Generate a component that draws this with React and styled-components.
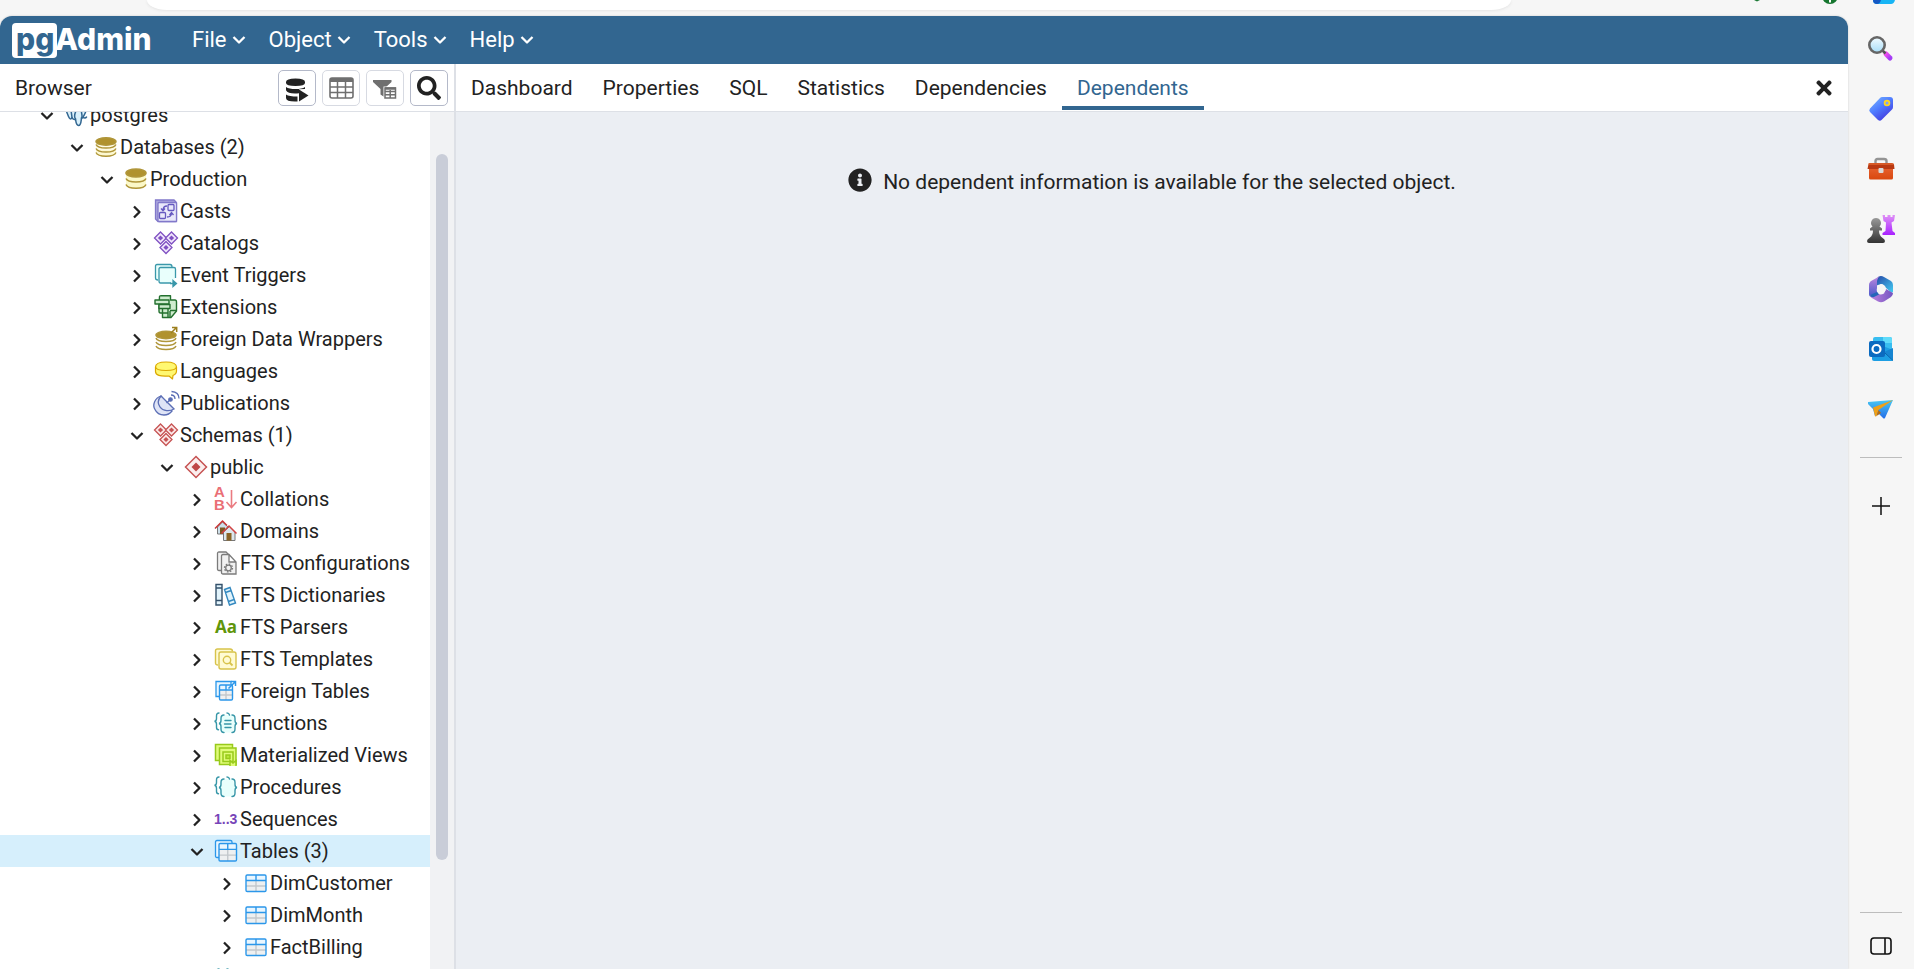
import React from 'react';
import styled, { createGlobalStyle } from 'styled-components';
import { FaSearch, FaTimes, FaInfoCircle } from 'react-icons/fa';

const GlobalStyle = createGlobalStyle`
  *, *::before, *::after { box-sizing: border-box; }
  body {
    margin: 0;
    background: #f6f6f6;
    color: #222;
    font-family: Roboto, "Liberation Sans", sans-serif;
    font-size: 21px;
  }
  button { font: inherit; color: inherit; background: none; border: 0; padding: 0; cursor: pointer; }
  svg { display: block; flex: none; }
`;

const blue = '#326690';
const line = '#dde0e6';

/* ---------- window frame ---------- */

const Page = styled.div`
  display: flex;
  flex-direction: column;
  height: 100vh;
  overflow: hidden;
`;

const BrowserStrip = styled.div`
  display: flex;
  flex: none;
  height: 16px;
  padding-left: 147px;
`;

const AddressBar = styled.div`
  flex: 1;
  height: 10px;
  background: #fff;
  border-radius: 0 0 20px 20px / 0 0 10px 10px;
  box-shadow: 0 1px 3px #e4e4e4;
`;

const StripActions = styled.div`
  display: flex;
  align-items: flex-start;
  justify-content: flex-end;
  gap: 35px;
  width: 403px;
  padding-right: 19px;
`;

const Body = styled.div`
  display: flex;
  flex: 1;
  min-height: 0;
`;

const AppWindow = styled.div`
  display: flex;
  flex-direction: column;
  flex: 1;
  min-width: 0;
  border-radius: 12px 12px 0 0;
  overflow: hidden;
  box-shadow: 0 0 2px #c4c4c4;
`;

/* ---------- header ---------- */

const Header = styled.header`
  display: flex;
  align-items: center;
  flex: none;
  height: 48px;
  padding-left: 12px;
  background: ${blue};
  color: #fff;
`;

const Logo = styled.div`
  display: flex;
  align-items: center;
  width: 168px;
  font-family: Inter, "DejaVu Sans", sans-serif;
  font-size: 30px;
  font-weight: 800;
  line-height: 33px;
`;

const LogoMark = styled.span`
  width: 45px;
  height: 35px;
  padding-left: 4px;
  border-radius: 4px;
  background: #fff;
  color: ${blue};
`;

const LogoName = styled.span`
  height: 35px;
  margin-left: -2px;
`;

const Menu = styled.nav`
  display: flex;
  gap: 23px;
  margin-left: 12px;
`;

const MenuButton = styled.button`
  display: flex;
  align-items: center;
  gap: 5px;
  font-size: 22px;
  line-height: 28px;
`;

/* ---------- panels ---------- */

const Panels = styled.div`
  display: flex;
  flex: 1;
  min-height: 0;
`;

const BrowserPanel = styled.section`
  display: flex;
  flex-direction: column;
  flex: none;
  width: 456px;
  border-right: 2px solid ${line};
  background: #fff;
`;

const PanelBar = styled.div`
  display: flex;
  align-items: center;
  flex: none;
  height: 48px;
  border-bottom: 1px solid ${line};
  background: #fff;
`;

const PanelTitle = styled.h1`
  flex: 1;
  margin: 0;
  padding-left: 15px;
  font-size: 21px;
  font-weight: 400;
`;

const Tools = styled.div`
  display: flex;
  gap: 6px;
  padding-right: 6px;
`;

const ToolButton = styled.button`
  display: flex;
  align-items: center;
  justify-content: center;
  width: 38px;
  height: 36px;
  border: 1px solid ${p => (p.disabled ? '#d7dae2' : '#b4b9c9')};
  border-radius: 5px;
  color: ${p => (p.disabled ? '#6f6f6f' : '#222')};
`;

const TreeArea = styled.div`
  display: flex;
  flex: 1;
  min-height: 0;
  overflow: hidden;
`;

const Tree = styled.ul`
  flex: 1;
  margin: -13px 0 0;
  padding: 0;
  list-style: none;
`;

const TreeRow = styled.li`
  display: flex;
  align-items: center;
  height: 32px;
  padding-left: ${p => 35 + p.$level * 30}px;
  background: ${p => (p.$selected ? '#d6effc' : 'transparent')};
  font-size: 20px;
  white-space: nowrap;
`;

const Toggle = styled.button`
  display: flex;
  align-items: center;
  justify-content: center;
  width: 24px;
  height: 24px;
  margin-right: 5px;
  padding-top: 2px;
`;

const TreeLabel = styled.span`
  padding-left: 2px;
`;

const ScrollTrack = styled.div`
  flex: none;
  width: 24px;
  padding: 42px 6px 0;
  background: #f1f2f4;
`;

const ScrollThumb = styled.div`
  height: calc(100% - 109px);
  border-radius: 6px;
  background: #c9cdd8;
`;

const MainPanel = styled.section`
  display: flex;
  flex-direction: column;
  flex: 1;
  min-width: 0;
  background: #ebeef3;
`;

const TabList = styled.div`
  display: flex;
  flex: 1;
  height: 46px;
  margin-bottom: 1px;
`;

const Tab = styled.button`
  padding: 6px 15px 0;
  border-bottom: 4px solid ${p => (p.$active ? blue : 'transparent')};
  color: ${p => (p.$active ? blue : '#222')};
`;

const CloseButton = styled.button`
  padding: 0 13px;
`;

const Message = styled.p`
  display: flex;
  align-items: flex-start;
  justify-content: center;
  gap: 11px;
  margin: 0;
  padding-top: 56px;
  line-height: 28px;
`;

/* ---------- side rail ---------- */

const Rail = styled.aside`
  display: flex;
  flex-direction: column;
  align-items: center;
  flex: none;
  width: 66px;
  padding-top: 3px;
`;

const RailButton = styled.button`
  display: flex;
  align-items: center;
  justify-content: center;
  width: 48px;
  height: ${p => (p.$compact ? 46 : 60)}px;
`;

const RailDivider = styled.hr`
  width: 42px;
  height: 1px;
  margin: ${p => (p.$bottom ? 'auto 0 10px' : '18px 0')};
  border: 0;
  background: #bdbdbd;
`;

/* ---------- icons ---------- */

const ChevronDown = () => (
  <svg width="14" height="10" viewBox="0 0 14 10" fill="none" stroke="currentColor" strokeWidth="2.3">
    <path d="M1.5 2 L7 7.5 L12.5 2" strokeLinejoin="round" />
  </svg>
);

const ChevronRight = () => (
  <svg width="10" height="14" viewBox="0 0 10 14" fill="none" stroke="currentColor" strokeWidth="2.3">
    <path d="M2 1.5 L7.5 7 L2 12.5" strokeLinejoin="round" />
  </svg>
);

const Diamonds = ({ color, fill }) =>
  [[6.5, 7], [17.5, 7], [12, 16.5]].map(([x, y]) => (
    <g key={`${x}-${y}`}>
      <path d={`M${x} ${y - 6} l6 6 l-6 6 l-6 -6z`} fill={fill} stroke={color} strokeWidth="1.3" />
      <path d={`M${x} ${y - 2.6} l2.6 2.6 l-2.6 2.6 l-2.6 -2.6z`} fill={color} />
    </g>
  ));

const Braces = ({ children }) => (
  <g fill="none" stroke="#3797a8" strokeWidth="1.4" strokeLinecap="round">
    <path d="M7 4 h10 q3 1 3 5 q0 3 2 3.500 q-2 .5 -2 4 q0 5 -4 5 h-7 q-3 0 -3 -5 q0 -3 -2 -3.500 q2 -.5 2 -4z" fill="#e8fffc" stroke="none" />
    <path d="M5 2 q-2.500 0 -2.500 3 v2.500 q0 2.500 -2 2.700 q2 .3 2 3 v3 q0 2.500 2 2.500" />
    <path d="M10 4 q-3 0 -3 3.500 v2 q0 2.700 -2 3 q2 .3 2 3 v2.500 q0 3.500 3 3.500" />
    <path d="M13 2 q2 0 2.500 2 M18 4 q3 0 3 3.500 v2 q0 2.700 2 3 q-2 .3 -2 3 v2.500 q0 3.500 -3 3.500" />
    {children}
  </g>
);

const TableGrid = ({ x, y, w, h }) => {
  const r1 = y + h / 3;
  const r2 = y + (h * 2) / 3;
  const c = x + w / 2;
  return (
    <g fill="none" strokeWidth="1.4">
      <rect x={x} y={y} width={w} height={h} rx="1.200" fill="#eef0f1" />
      <rect x={x} y={y} width={w} height={h / 3} fill="#e9f6ff" />
      <path d={`M${x} ${r2} h${w} M${c} ${r1} v${(h * 2) / 3}`} stroke="#c3c8cc" />
      <path d={`M${x} ${r1} h${w} M${c} ${y} v${h / 3}`} stroke="#2b97ea" />
      <rect x={x} y={y} width={w} height={h} rx="1.200" stroke="#2b97ea" />
    </g>
  );
};

const glyphs = {
  server: (
    <g stroke="#336791" strokeWidth="1.5" fill="#d9f0fb" strokeLinejoin="round" strokeLinecap="round">
      <path d="M1.500 6 C1 1 8 0 11 2 C15 -1 22 1 22.500 5 C22.500 9 20 12 18.500 15 L17.500 15 C17 19 17 22.500 14.500 22.500 C12 22.500 12 19 11.500 16 C10 17 8.500 16 8 14.500 C7 17 5.500 16 4.500 13.500z" />
      <path d="M8 14.500 L7 7 M11.500 16 C9.500 13 11 10 12 8 M17.500 15 C19 13 17 10 17.500 7 M19 14.500 q2.500 1 3.500 -.5" fill="none" />
    </g>
  ),
  databases: (
    <g fill="#fdf9d2" stroke="#b0963a" strokeWidth="1.400">
      <path d="M2 15 v3 q1 3.500 10 3.500 t10 -3.500 v-3z" stroke="none" />
      <path d="M2 6 v14 h20 v-14z" stroke="none" opacity=".6" />
      <path d="M2 9.500 q1.500 3.500 10 3.500 t10 -3.500 M2 13.500 q1.500 3.500 10 3.500 t10 -3.500 M2 17.500 q1.500 3.700 10 3.700 t10 -3.700" fill="none" />
      <ellipse cx="12" cy="6.500" rx="10" ry="3.800" fill="#b0922e" />
    </g>
  ),
  database: (
    <g fill="#fbf8c8" stroke="#b0963a" strokeWidth="1.600">
      <path d="M2 6 v12 q1 3.500 10 3.500 t10 -3.500 v-12z" stroke="none" />
      <path d="M2 11.500 q1.500 3.500 10 3.500 t10 -3.500 M2 17.500 q1.500 3.700 10 3.700 t10 -3.700" fill="none" />
      <ellipse cx="12" cy="6" rx="10" ry="4" fill="#b0922e" />
    </g>
  ),
  casts: (
    <g fill="none" stroke="#6558c0" strokeWidth="1.300">
      <path d="M1.500 20 V1 H20 L22.500 3.500 V22.500 H4z" fill="#aba6dd" stroke="#8178ca" />
      <rect x="4" y="3.500" width="18.500" height="19" rx="1" fill="#e9e8fa" stroke="#8178ca" />
      <rect x="14" y="5.500" width="6" height="6" rx="1" />
      <rect x="5.500" y="13.500" width="6" height="6" rx="1" />
      <path d="M13 7 Q9 7 9 11.500 M7 9.500 L9 11.800 L11 9.500 M13 18 Q17.500 18 17.500 14 M15.500 16 L17.500 13.500 L19.500 16" />
    </g>
  ),
  catalogs: <Diamonds color="#7f50c2" fill="#efe4fb" />,
  eventTriggers: (
    <g fill="#e9fffc" stroke="#3b98aa" strokeWidth="1.300">
      <path d="M4 17 Q1.500 17 1.500 15 V3 Q1.500 1.500 3 1.500 H16 Q18 1.500 18 4" />
      <path d="M17 20 H6.500 Q5 20 5 18 V6 Q5 4.500 6.500 4.500 H20 Q21.500 4.500 21.500 6 V15" />
      <path d="M16 20.500 H22 M19 17.500 L22.500 20.500 L19 23.500z" fill="#2d8fa2" />
    </g>
  ),
  extensions: (
    <g fill="#cfeccf" stroke="#24702f" strokeWidth="1.400" strokeLinejoin="round">
      <path d="M5.500 1.500 Q5.500 .7 7 .7 H16.500 V5 H21 Q22.500 5 22.500 7 V16 L17 22.500 H8.500 V18 H6.500 Q5 18 5 16 V12z" />
      <rect x="1" y="5" width="14" height="4" />
      <rect x="5" y="9.500" width="11" height="4" />
      <path d="M8.500 13.500 V18 H14 V14 M14 18 V22.500 M16 15.500 H22 M16 16 V22.500" fill="none" />
    </g>
  ),
  foreignData: (
    <g fill="none" stroke="#b0963a" strokeWidth="1.500">
      <path d="M2 11 q1 3.500 10 3.500 t10 -3.500 M2 15 q1.500 3.500 10 3.500 t10 -3.500 M2 19 q1.500 3.500 10 3.500 t10 -3.500" />
      <ellipse cx="12" cy="8" rx="10" ry="3.700" fill="#b0922e" />
      <path d="M17 6 L22.500 .5 M18 .5 H22.700 V5" stroke="#9d7f1d" />
    </g>
  ),
  languages: (
    <g fill="#fff871" stroke="#dba800" strokeWidth="1.200" strokeLinejoin="round">
      <path d="M1.500 8 Q1.500 3 12 3 Q22.500 3 22.500 8 V12 Q22.500 15 19 16.500 L18.500 20 L15 17 Q1.500 18 1.500 12.500z" />
      <path d="M1.500 8 Q2 11.500 12 11.500 T22.500 8" fill="none" />
    </g>
  ),
  publications: (
    <g fill="#dfe4f6" stroke="#5b6eb5" strokeWidth="1.300">
      <path d="M7 5 C1 7 -2 14 1 18.500 Q3.500 24 10 24 Q15 24 18 20z" />
      <path d="M7 5 C4.500 8 3 12 6 16 C9 20.500 16 20.500 20 18z" />
      <path d="M12.500 12 L16.500 8.500" />
      <circle cx="16.500" cy="8.500" r="1.700" fill="#5b6eb5" />
      <path d="M17 4 Q21 4 21 8 M17.500 .5 Q25 1 25 7.500" fill="none" />
    </g>
  ),
  schemas: <Diamonds color="#c65353" fill="#fbe6e6" />,
  schema: (
    <g>
      <path d="M12 1.500 L22.500 12 L12 22.500 L1.500 12z" fill="#fbeeee" stroke="#c65353" strokeWidth="1.500" />
      <path d="M12 7.500 L16.500 12 L12 16.500 L7.500 12z" fill="#bf4646" />
    </g>
  ),
  collations: (
    <g fill="#ea6f76" fontFamily="Liberation Sans, sans-serif" fontWeight="700" fontSize="15">
      <text x="0" y="10">A</text>
      <text x="0" y="23">B</text>
      <path d="M17.500 3 V20.500 M12.500 15 L17.500 20.500 L22.500 15" fill="none" stroke="#ea7a80" strokeWidth="1.600" />
    </g>
  ),
  domains: (
    <g>
      <path d="M3.500 8 L8.500 3 L14 8 V15 H3.500z" fill="#cfe0ea" stroke="#777" />
      <path d="M6 8.500 H11 V15 H6z" fill="#7d5a24" />
      <path d="M1 9.500 L8.500 2 L13 6.500" fill="none" stroke="#c93535" strokeWidth="1.500" />
      <path d="M9.500 13 L15.500 7.500 L21 13 V21.500 H9.500z" fill="#dce7ee" stroke="#777" />
      <path d="M12.500 14 H17.500 V21.500 H12.500z" fill="#8a6425" />
      <path d="M7.500 14.500 L15 7 L22.500 14.500" fill="none" stroke="#d24343" strokeWidth="1.500" />
    </g>
  ),
  ftsConfig: (
    <g fill="#f1f1f1" stroke="#7b7b7b" strokeWidth="1.300">
      <path d="M7 19.500 H5 Q3.500 19.500 3.500 18 V2.500 Q3.500 1 5 1 H12 L15 4" />
      <path d="M7.500 5 Q7.500 3.500 9 3.500 H15 L22 11 V23 H9 Q7.500 23 7.500 21.500z M15 3.500 V11 H22" />
      <circle cx="14.500" cy="17" r="2.800" fill="none" />
      <circle cx="14.500" cy="17" r="4" fill="none" strokeDasharray="1.600 1.500" />
    </g>
  ),
  ftsDictionaries: (
    <g fill="#e2f4fc" strokeWidth="1.400">
      <path d="M2 1.500 H8 V22 H2z M2 5 H8 M2 17.500 H8" stroke="#34516b" />
      <path d="M10.500 6.500 L16 4.500 L21.500 20 L15.500 22z M11.500 9.500 L17.200 7.500 M14.500 18.500 L20.200 16.500" stroke="#3489c0" />
    </g>
  ),
  ftsParsers: (
    <text x="1" y="18" fill="#5f960b" fontFamily="Open Sans, sans-serif" fontWeight="700" fontSize="17">Aa</text>
  ),
  ftsTemplates: (
    <g fill="#fffbd3" stroke="#d8c34b" strokeWidth="1.400">
      <path d="M4 18 Q1.500 18 1.500 16 V4 Q1.500 2 3.500 2 H16 Q18.500 2 18.500 4.500" />
      <rect x="5" y="5" width="17" height="17" rx="2" />
      <circle cx="13" cy="13" r="3.700" />
      <path d="M15.500 15.500 L18.500 18.500" strokeWidth="1.800" />
    </g>
  ),
  foreignTables: (
    <g>
      <path d="M5 17.500 H2 V2.500 H17 V6" fill="#e9f6ff" stroke="#2b97ea" strokeWidth="1.300" />
      <TableGrid x={5.500} y={6} w={13} h={15} />
      <path d="M14.500 9.500 L21.500 2.500 M17 2.500 H21.500 V7" fill="none" stroke="#2b97ea" strokeWidth="1.500" />
    </g>
  ),
  functions: (
    <Braces>
      <path d="M11 9.500 h6 M10.500 13 h6.500 M11 16.500 h6" />
    </Braces>
  ),
  procedures: <Braces />,
  materializedViews: (
    <g fill="#e0fb7a" stroke="#98ca1b" strokeWidth="1.500">
      <path d="M1.500 17.500 V1.500 H18.500 V17.500z" />
      <path d="M5.500 21.500 V5 H22 V21.500z" />
      <rect x="9" y="9" width="10" height="9.500" />
      <rect x="12" y="12" width="4" height="3.500" fill="#b8e83a" />
      <path d="M16 23 V17.500 L19 20 L22 17.500 V23" fill="#e0fb7a" />
    </g>
  ),
  sequences: (
    <text x="0" y="17" fill="#7745b8" fontFamily="Liberation Sans, sans-serif" fontWeight="700" fontSize="14">1..3</text>
  ),
  tables: (
    <g>
      <path d="M5 18.500 H3 Q1.500 18.500 1.500 17 V3 Q1.500 1.500 3 1.500 H16.500 Q18 1.500 18 3 V5" fill="#e9f6ff" stroke="#2b97ea" strokeWidth="1.300" />
      <TableGrid x={5} y={4.500} w={17.500} h={17.500} />
    </g>
  ),
  table: <TableGrid x={2} y={4} w={20} h={16.500} />,
  triggerFunctions: <Braces />,
};

const TreeIcon = ({ name }) => (
  <svg width="24" height="24" viewBox="0 0 24 24" overflow="visible" aria-hidden="true">
    {glyphs[name]}
  </svg>
);

const QueryToolIcon = () => (
  <svg width="24" height="28" viewBox="0 -3 24 28" fill="#222">
    <path d="M1 5 q0 -3.500 9.500 -3.500 t9.500 3.500 v1 q0 3 -9.500 3 t-9.500 -3z" />
    <path d="M1 10 q3 2 9.500 2 t9.500 -2 v2 l-6 .3 v4 q-11 1 -13 -3z" />
    <path d="M1 17.500 q3 2 11.500 2 v5 q-11.500 .5 -11.500 -3.500z" />
    <path d="M14 12.500 L23.500 18.500 L14 24.500z" />
  </svg>
);

const ViewDataIcon = () => (
  <svg width="25" height="22" viewBox="0 0 25 22" fill="none" stroke="currentColor">
    <rect x="1" y="1" width="23" height="20" rx="2" strokeWidth="1.600" />
    <path d="M1 3 h23" strokeWidth="4" />
    <path d="M1 10 h23 M1 15.500 h23 M8.500 4 v17 M16.500 4 v17" strokeWidth="1.500" />
  </svg>
);

const FilterRowsIcon = () => (
  <svg width="24" height="24" viewBox="0 -2 24 24" fill="currentColor">
    <path d="M0 2 H18.500 V4 L12 10 V19.500 L7.500 16.500 V11 L0 4z" />
    <path d="M10.500 8.500 H24 V21.500 H10.500z" fill="#fff" />
    <path d="M12 10 H22.500 V20 H12z M12 13.500 H22.500 M12 16.800 H22.500 M17.200 12 V20" fill="none" stroke="currentColor" strokeWidth="1.500" />
    <path d="M12 9.300 h11 v2.500 h-11z" />
  </svg>
);

const railItems = {
  Search: (
    <svg width="26" height="26" viewBox="0 0 26 26">
      <defs>
        <linearGradient id="lens" x2="0" y2="1"><stop stopColor="#f2fbff" /><stop offset="1" stopColor="#a6dcf7" /></linearGradient>
        <linearGradient id="handle" x2="1" y2="1"><stop stopColor="#f04cf0" /><stop offset="1" stopColor="#a33cf5" /></linearGradient>
      </defs>
      <path d="M18 18 L22 22" stroke="url(#handle)" strokeWidth="5" strokeLinecap="round" />
      <path d="M14.500 14.500 L17.500 17.500" stroke="#555" strokeWidth="2.500" />
      <circle cx="9" cy="9" r="7.700" fill="url(#lens)" stroke="#666" strokeWidth="2.600" />
    </svg>
  ),
  Shopping: (
    <svg width="26" height="26" viewBox="0 0 26 26">
      <defs><linearGradient id="tag" x1="0" y1="0" x2=".7" y2="1"><stop stopColor="#7cbcff" /><stop offset=".5" stopColor="#4f7cff" /><stop offset="1" stopColor="#4336dc" /></linearGradient></defs>
      <path d="M14 1 H22 Q25 1 25 4 V11 Q25 12.500 24 13.500 L13.500 24 Q12 25.500 10 24 L2 16 Q.5 14.500 2 12.500 L12 2 Q13 1 14 1z" fill="url(#tag)" />
      <circle cx="19" cy="7" r="2.400" fill="#7aa2ff" stroke="#ffd51c" strokeWidth="1.800" />
    </svg>
  ),
  Tools: (
    <svg width="28" height="24" viewBox="0 0 28 24">
      <defs><linearGradient id="box" x2="0" y2="1"><stop stopColor="#e86331" /><stop offset="1" stopColor="#d9480f" /></linearGradient></defs>
      <path d="M8.500 8 V4 Q8.500 2 10.500 2 H17 Q19.500 2 19.500 4 V8" fill="none" stroke="#949494" strokeWidth="2.400" />
      <rect x="2" y="9" width="24" height="13.500" rx="1.500" fill="url(#box)" />
      <path d="M1.500 7 Q1.500 6 3 6 H25 Q26.500 6 27 7.500 L27.500 12 H.5z" fill="#b93912" />
      <path d="M1.500 7 h25" stroke="#f47b3a" />
      <rect x="11.500" y="11" width="5" height="5" rx="1" fill="#d9d9d9" />
    </svg>
  ),
  Games: (
    <svg width="28" height="28" viewBox="0 0 28 28">
      <defs>
        <linearGradient id="rook" x2="0" y2="1"><stop stopColor="#df91f6" /><stop offset="1" stopColor="#a821ff" /></linearGradient>
        <linearGradient id="pawn" x2="0" y2="1"><stop stopColor="#999" /><stop offset="1" stopColor="#333" /></linearGradient>
      </defs>
      <path d="M15.500 0 H18 V2 H20.500 V0 H23.500 V2 H25.500 V0 H28 L27 6 L24.500 7.500 L25.500 16 L28 18 V20 H15.500 V18 L18.500 16 L19 7.500 L16.500 6z" fill="url(#rook)" />
      <path d="M9 3 A5 5 0 0 1 12.500 11.500 L15 13.500 V15.500 H12 Q12 20 15 22.500 Q18 24 18 26 Q18 28 16 28 H2 Q0 28 0 26 Q0 24 3 22.500 Q6 20 6 15.500 H3 V13.500 L5.500 11.500 A5 5 0 0 1 9 3z" fill="url(#pawn)" />
    </svg>
  ),
  'Microsoft 365': (
    <svg width="26" height="28" viewBox="0 0 26 28">
      <defs>
        <linearGradient id="m1" x2="1" y2="1"><stop stopColor="#2549a8" /><stop offset="1" stopColor="#44ccf3" /></linearGradient>
        <linearGradient id="m2" x2="0" y2="1"><stop stopColor="#c187de" /><stop offset="1" stopColor="#4558ca" /></linearGradient>
        <linearGradient id="m3" x2="1"><stop stopColor="#bd82df" /><stop offset="1" stopColor="#7455c1" /></linearGradient>
      </defs>
      <path d="M10 2 Q13 0 16 2 L23 6 Q25 7.500 25 10 V17 Q24 18 22 16.500 L17 12 Q16 9 13 9 L8.500 10.500 V5z" fill="url(#m1)" />
      <path d="M12 1 L4 5.500 Q1 7 1 10 V19 Q1 22 4 22 L10.500 19 Q8 16.500 9 13 V6 Q9 3 12 1z" fill="url(#m2)" />
      <path d="M2 20 L10.500 19 Q13 20 16 18.500 L18 14 L25 18 Q25 20.500 23 22 L16 26.500 Q13 28 10 26.500 L3 22.500z" fill="url(#m3)" />
      <path d="M2 20 Q3 23 6 22 L11 19.500 L9 17z" fill="#2466b8" />
      <path d="M13.500 9.500 L17 11.500 V16 L13.500 18.500 L9.500 16.500 V11.500z" fill="#f6f6f6" stroke="#f6f6f6" strokeLinejoin="round" />
    </svg>
  ),
  Outlook: (
    <svg width="26" height="26" viewBox="0 0 26 26">
      <path d="M5 3 Q5 1 7 1 H22 Q24 1 24 3 V14 H5z" fill="#38bdf0" />
      <path d="M15 1 H22 Q24 1 24 3 V7 H15z" fill="#5fdbfa" />
      <path d="M4 10 H15 L25 14 V24 Q25 25 24 25 H6 Q4 25 4 23z" fill="#1d9ee3" />
      <path d="M16 16 L25 12 V24z" fill="#1785d1" />
      <path d="M11 20 L17 17 L25 24.500" fill="none" stroke="#0c64ad" />
      <rect x="1" y="5" width="16" height="16" rx="2" fill="#0b6bc0" />
      <circle cx="8.500" cy="13" r="4" fill="none" stroke="#fff" strokeWidth="2.200" />
    </svg>
  ),
  Drop: (
    <svg width="28" height="22" viewBox="0 0 28 22">
      <defs><linearGradient id="plane" x2="0" y2="1"><stop stopColor="#49c7f2" /><stop offset="1" stopColor="#246ee9" /></linearGradient></defs>
      <path d="M1 4 L26 2 L18 20 Q17 21 16 20 L12 16 L8 18 L6 11 L1 6z" fill="url(#plane)" />
      <path d="M26 2 L6 9.500 L8 18 Q8.500 19 9.500 18 L11.500 12z" fill="#efa018" />
      <path d="M9.500 18 L11.500 12 L14 15z" fill="#b66b12" />
    </svg>
  ),
};

/* ---------- data ---------- */

const menus = ['File', 'Object', 'Tools', 'Help'];
const tabs = ['Dashboard', 'Properties', 'SQL', 'Statistics', 'Dependencies', 'Dependents'];

const tree = [
  [0, 'server', 'postgres', true],
  [1, 'databases', 'Databases (2)', true],
  [2, 'database', 'Production', true],
  [3, 'casts', 'Casts'],
  [3, 'catalogs', 'Catalogs'],
  [3, 'eventTriggers', 'Event Triggers'],
  [3, 'extensions', 'Extensions'],
  [3, 'foreignData', 'Foreign Data Wrappers'],
  [3, 'languages', 'Languages'],
  [3, 'publications', 'Publications'],
  [3, 'schemas', 'Schemas (1)', true],
  [4, 'schema', 'public', true],
  [5, 'collations', 'Collations'],
  [5, 'domains', 'Domains'],
  [5, 'ftsConfig', 'FTS Configurations'],
  [5, 'ftsDictionaries', 'FTS Dictionaries'],
  [5, 'ftsParsers', 'FTS Parsers'],
  [5, 'ftsTemplates', 'FTS Templates'],
  [5, 'foreignTables', 'Foreign Tables'],
  [5, 'functions', 'Functions'],
  [5, 'materializedViews', 'Materialized Views'],
  [5, 'procedures', 'Procedures'],
  [5, 'sequences', 'Sequences'],
  [5, 'tables', 'Tables (3)', true],
  [6, 'table', 'DimCustomer'],
  [6, 'table', 'DimMonth'],
  [6, 'table', 'FactBilling'],
  [5, 'triggerFunctions', ''],
];

export default function App() {
  return (
    <Page>
      <GlobalStyle />
      <BrowserStrip>
        <AddressBar />
        <StripActions>
          <svg width="36" height="2" viewBox="0 0 36 2"><path d="M3 0 h6 l-3 1.500z" fill="#1d7a36" /></svg>
          <svg width="16" height="5" viewBox="0 0 16 5">
            <circle cx="8" cy="-4" r="8" fill="#16762f" />
            <path d="M8 0 v2.500" stroke="#fff" strokeWidth="2" />
          </svg>
          <svg width="22" height="5" viewBox="0 0 22 5">
            <path d="M0 0 H22 Q21 4 18 4 H4 Q0 4 0 0z" fill="#18b5f5" />
            <path d="M0 0 H8 Q7 4 4 4 Q0 4 0 0z" fill="#1458c4" />
          </svg>
        </StripActions>
      </BrowserStrip>
      <Body>
        <AppWindow>
          <Header>
            <Logo>
              <LogoMark>pg</LogoMark>
              <LogoName>Admin</LogoName>
            </Logo>
            <Menu>
              {menus.map(name => (
                <MenuButton key={name}>
                  {name}
                  <ChevronDown />
                </MenuButton>
              ))}
            </Menu>
          </Header>
          <Panels>
            <BrowserPanel>
              <PanelBar>
                <PanelTitle>Browser</PanelTitle>
                <Tools>
                  <ToolButton aria-label="Query tool"><QueryToolIcon /></ToolButton>
                  <ToolButton aria-label="View data" disabled><ViewDataIcon /></ToolButton>
                  <ToolButton aria-label="Filtered rows" disabled><FilterRowsIcon /></ToolButton>
                  <ToolButton aria-label="Search objects"><FaSearch size={24} /></ToolButton>
                </Tools>
              </PanelBar>
              <TreeArea>
                <Tree>
                  {tree.map(([level, icon, label, open]) => (
                    <TreeRow key={icon + label} $level={level} $selected={icon === 'tables'}>
                      <Toggle aria-label={open ? 'Collapse' : 'Expand'}>
                        {label && (open ? <ChevronDown /> : <ChevronRight />)}
                      </Toggle>
                      <TreeIcon name={icon} />
                      <TreeLabel>{label}</TreeLabel>
                    </TreeRow>
                  ))}
                </Tree>
                <ScrollTrack>
                  <ScrollThumb />
                </ScrollTrack>
              </TreeArea>
            </BrowserPanel>
            <MainPanel>
              <PanelBar>
                <TabList role="tablist">
                  {tabs.map(name => (
                    <Tab key={name} role="tab" aria-selected={name === 'Dependents'} $active={name === 'Dependents'}>
                      {name}
                    </Tab>
                  ))}
                </TabList>
                <CloseButton aria-label="Close"><FaTimes size={22} /></CloseButton>
              </PanelBar>
              <Message>
                <FaInfoCircle size={24} />
                No dependent information is available for the selected object.
              </Message>
            </MainPanel>
          </Panels>
        </AppWindow>
        <Rail>
          {Object.entries(railItems).map(([name, icon]) => (
            <RailButton key={name} aria-label={name}>{icon}</RailButton>
          ))}
          <RailDivider />
          <RailButton aria-label="Add">
            <svg width="18" height="18" viewBox="0 0 18 18" stroke="#111" strokeWidth="1.500"><path d="M9 0 V18 M0 9 H18" /></svg>
          </RailButton>
          <RailDivider $bottom />
          <RailButton aria-label="Toggle sidebar" $compact>
            <svg width="22" height="18" viewBox="0 0 22 18" fill="none" stroke="#111" strokeWidth="1.600">
              <rect x="1" y="1" width="20" height="16" rx="3" />
              <path d="M15 1 V17" />
            </svg>
          </RailButton>
        </Rail>
      </Body>
    </Page>
  );
}
